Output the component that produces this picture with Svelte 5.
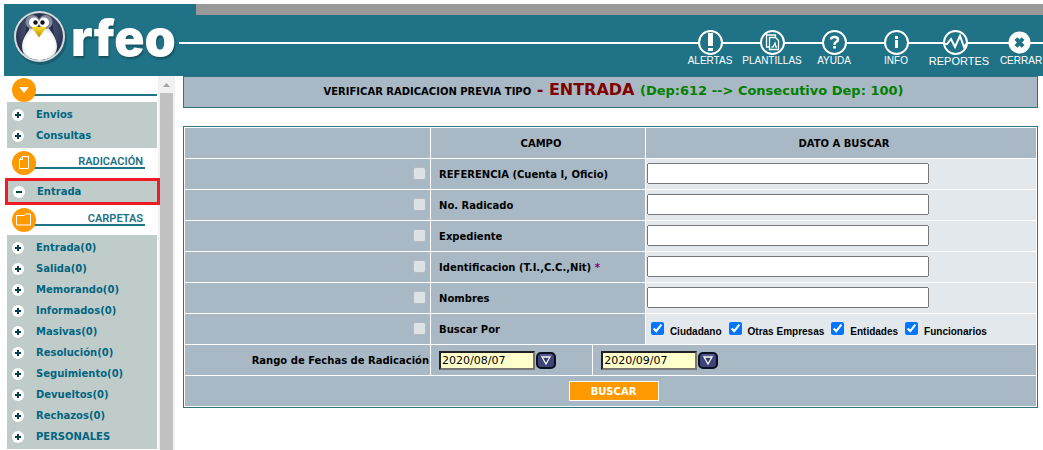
<script lang="ts">
	type Check = { id: string; label: string; on: boolean };

	const folders = [
		'Entrada(0)',
		'Salida(0)',
		'Memorando(0)',
		'Informados(0)',
		'Masivas(0)',
		'Resolución(0)',
		'Seguimiento(0)',
		'Devueltos(0)',
		'Rechazos(0)',
		'PERSONALES'
	];
	const fields = [
		{ id: 'referencia', label: 'REFERENCIA (Cuenta I, Oficio)', required: false },
		{ id: 'radicado', label: 'No. Radicado', required: false },
		{ id: 'expediente', label: 'Expediente', required: false },
		{ id: 'identificacion', label: 'Identificacion (T.I.,C.C.,Nit)', required: true },
		{ id: 'nombres', label: 'Nombres', required: false }
	];

	let values = $state<Record<string, string>>({});
	let groups = $state<Check[]>([
		{ id: 'ciudadano', label: 'Ciudadano', on: true },
		{ id: 'empresas', label: 'Otras Empresas', on: true },
		{ id: 'entidades', label: 'Entidades', on: true },
		{ id: 'funcionarios', label: 'Funcionarios', on: true }
	]);
	let from = $state('2020/08/07');
	let to = $state('2020/09/07');
</script>

{#snippet bullet(open: boolean)}
	<svg class="bullet" viewBox="0 0 12 12" aria-hidden="true">
		<circle cx="6" cy="6" r="6" fill="#fff" />
		<path d={open ? 'M3 6h6' : 'M3 6h6M6 3v6'} stroke="#073f4e" stroke-width="2" />
	</svg>
{/snippet}

{#snippet picker()}
	<button type="button" class="picker" aria-label="Abrir calendario">
		<svg viewBox="0 0 20 17">
			<rect x="1" y="1" width="18" height="15" rx="4" fill="#3d4578" stroke="#0b0f20" stroke-width="2" />
			<path d="M4 3h12" stroke="#6c75a8" />
			<path d="M6 5h8l-4 7z" fill="#343b70" stroke="#fff" stroke-width="1.3" />
		</svg>
	</button>
{/snippet}

<div class="page">
	<header>
		<a class="logo" href="#inicio">
			<svg viewBox="0 0 56 58" aria-hidden="true">
				<defs>
					<radialGradient id="night" cx="50%" cy="40%" r="60%">
						<stop offset="0" stop-color="#6b7594" />
						<stop offset="1" stop-color="#1f2946" />
					</radialGradient>
					<radialGradient id="belly" cx="50%" cy="55%" r="55%">
						<stop offset="0.75" stop-color="#fff" />
						<stop offset="1" stop-color="#d5dae0" />
					</radialGradient>
					<linearGradient id="beak" x2="0" y2="1">
						<stop offset="0" stop-color="#ffdf2e" />
						<stop offset="1" stop-color="#b98d00" />
					</linearGradient>
				</defs>
				<circle cx="29" cy="30" r="26" fill="#14515f" opacity="0.6" />
				<circle cx="27.5" cy="27.5" r="25.5" fill="#d5dadd" />
				<circle cx="27.5" cy="27.5" r="23.5" fill="url(#night)" />
				<path
					d="M27 5C17 5 14 11 14 18S9 32 10 40q5 11 17 11t17-10c2-9-3-16-3-23S37 5 27 5z"
					fill="#262f4c"
				/>
				<path
					d="M27 21c-6-5-9-4-10 0-4 5-7 11-7 17 0 8 8 13 17.500 13S45 46 45 38c0-6-3-12-7-17-2-4-5-4-11 0z"
					fill="url(#belly)"
				/>
				<circle cx="20.5" cy="13" r="7" fill="#858c9f" />
				<circle cx="33.5" cy="13" r="7" fill="#858c9f" />
				<circle cx="22" cy="13.5" r="5" fill="#fff" />
				<circle cx="32" cy="13.5" r="5" fill="#fff" />
				<circle cx="23.5" cy="13.5" r="2.2" fill="#111" />
				<circle cx="30.5" cy="13.5" r="2.2" fill="#111" />
				<path d="M19.500 18q4-1 7.500 0 4-1 7.500 0L27 28.500z" fill="url(#beak)" />
			</svg>
			<span>rfeo</span>
		</a>
		<div class="top">
			<div class="strip"></div>
			<nav>
				<a href="#alertas">
					<svg width="25" height="25" viewBox="0 0 25 25">
						<circle cx="12.5" cy="12.5" r="11.5" />
						<path class="solid" d="M10 3h5v13h-5zM10 18h5v3h-5z" />
					</svg>
					ALERTAS
				</a>
				<a href="#plantillas">
					<svg width="25" height="25" viewBox="0 0 25 25">
						<circle cx="12.5" cy="12.5" r="11.5" />
						<path
							class="thin"
							d="M9 17H6.500V5H15.500V7M9.500 7.500h6l3 3v9h-9zM11.500 17h1.500l2-4 1 4h1"
						/>
					</svg>
					PLANTILLAS
				</a>
				<a href="#ayuda">
					<svg width="25" height="25" viewBox="0 0 25 25">
						<circle cx="12.5" cy="12.5" r="11.5" />
						<path d="M9 9.500Q9 7 12.500 7T16 9.500Q16 11 14 12 12.500 12.800 12.500 15" stroke-width="2.5" />
						<path class="solid" d="M11 16h3v2.500h-3z" />
					</svg>
					AYUDA
				</a>
				<a href="#info">
					<svg width="25" height="25" viewBox="0 0 25 25">
						<circle cx="12.5" cy="12.5" r="11.5" />
						<path class="solid" d="M11 6h3v3h-3zM11 10h3v8h-3z" />
					</svg>
					INFO
				</a>
				<a href="#reportes" class="large">
					<svg width="33" height="25" viewBox="0 0 33 25">
						<circle cx="12.5" cy="12.5" r="11.5" />
						<path d="M1 14h3l4-5 4 8 5-11 4 11 3-4" />
					</svg>
					REPORTES
				</a>
				<a href="#cerrar" class="close">
					<svg width="29" height="25" viewBox="0 0 29 25">
						<circle class="solid" cx="12.5" cy="12.5" r="11" />
						<path class="cross" d="M9 8.500l7 8M16 8.500l-7 8" />
					</svg>
					CERRAR
				</a>
			</nav>
		</div>
	</header>

	<div class="body">
		<aside>
			<div class="menu">
				<div class="head first">
					<svg viewBox="0 0 24 24"><circle cx="12" cy="12" r="12" /><path d="M8 9.500h8l-4 5z" fill="#fff" /></svg>
					<div class="line"></div>
				</div>
				<ul>
					<li><a href="#envios">{@render bullet(false)}Envios</a></li>
					<li><a href="#consultas">{@render bullet(false)}Consultas</a></li>
				</ul>

				<div class="head">
					<svg viewBox="0 0 24 24">
						<circle cx="12" cy="12" r="12" />
						<path d="M10.500 5.500h6v12h-9v-9zM10.500 5.500v3h-3" />
					</svg>
					<h2 class="line">RADICACIÓN</h2>
				</div>
				<ul class="current">
					<li><a href="#radicar">{@render bullet(true)}Entrada</a></li>
				</ul>

				<div class="head">
					<svg viewBox="0 0 24 24">
						<circle cx="12" cy="12" r="12" />
						<path d="M4.500 7.500h8l1.500-1.500h4.500v11h-14z" />
					</svg>
					<h2 class="line">CARPETAS</h2>
				</div>
				<ul>
					{#each folders as folder}
						<li><a href="#carpeta">{@render bullet(false)}{folder}</a></li>
					{/each}
				</ul>
			</div>
			<div class="scrollbar">
				<svg viewBox="0 0 17 17"><path d="M5 11l3.500-4 3.500 4z" fill="#a3a3a3" /></svg>
				<div class="thumb"></div>
			</div>
		</aside>

		<main>
			<h1>
				VERIFICAR RADICACION PREVIA TIPO
				<span class="kind">- ENTRADA</span>
				<span class="dep">(Dep:612 --&gt; Consecutivo Dep: 100)</span>
			</h1>

			<form onsubmit={(e) => e.preventDefault()}>
				<table>
					<colgroup>
						<col style="width: 28.9%" />
						<col style="width: 19%" />
						<col style="width: 6.1%" />
						<col />
					</colgroup>
					<thead>
						<tr>
							<th></th>
							<th colspan="2">CAMPO</th>
							<th>DATO A BUSCAR</th>
						</tr>
					</thead>
					<tbody>
						{#each fields as field}
							<tr>
								<td class="tick"><input type="checkbox" disabled aria-label={field.label} /></td>
								<td class="name" colspan="2">
									<label for={field.id}
										>{field.label}{#if field.required}<span class="star">&nbsp;*</span>{/if}</label
									>
								</td>
								<td class="value">
									<input type="text" id={field.id} bind:value={values[field.id]} />
								</td>
							</tr>
						{/each}
						<tr>
							<td class="tick"><input type="checkbox" disabled aria-label="Buscar Por" /></td>
							<td class="name" colspan="2">Buscar Por</td>
							<td class="value">
								<div class="groups">
									{#each groups as group (group.id)}
										<label><input type="checkbox" bind:checked={group.on} />{group.label}</label>
									{/each}
								</div>
							</td>
						</tr>
						<tr>
							<td class="range"><label for="from">Rango de Fechas de Radicación</label></td>
							<td class="name">
								<div class="date">
									<input type="text" id="from" bind:value={from} />
									{@render picker()}
								</div>
							</td>
							<td class="name" colspan="2">
								<div class="date">
									<input type="text" aria-label="Fecha final" bind:value={to} />
									{@render picker()}
								</div>
							</td>
						</tr>
						<tr>
							<td class="submit" colspan="4"><button type="submit">BUSCAR</button></td>
						</tr>
					</tbody>
				</table>
			</form>
		</main>
	</div>
</div>

<style>
	:global(body) {
		background: #fff;
	}

	.page {
		--teal: #207286;
		--cell: #a8b9c5;
		display: flex;
		flex-direction: column;
		min-height: 100vh;
		box-sizing: border-box;
		padding: 4px 0 0 4px;
		font-family: Verdana, 'DejaVu Sans', sans-serif;
		font-size: 10px;
		color: #000;
	}

	a {
		text-decoration: none;
	}

	header {
		display: flex;
		height: 72px;
		background: var(--teal);
	}

	.logo {
		display: flex;
		align-items: center;
		width: 175px;
		flex-shrink: 0;
		box-sizing: border-box;
		padding: 0 0 4px 8px;
		color: #fff;
		font: 900 50px/56px Inter, sans-serif;
		text-shadow: 1px 2px 2px #14515f;
		& svg {
			width: 56px;
			height: 58px;
			margin-right: 3px;
		}
	}

	.top {
		flex: 1;
	}

	.strip {
		height: 11px;
		margin-left: 17px;
		background: #999;
	}

	nav {
		display: flex;
		justify-content: flex-end;
		padding-top: 15px;
		background: linear-gradient(#fff, #fff) 0 27px / 100% 2px no-repeat;
		& a {
			display: flex;
			flex-direction: column;
			align-items: center;
			box-sizing: border-box;
			width: 62px;
			color: #fff;
			font: 10px/12px 'Liberation Sans', Arial, sans-serif;
		}
		& .large {
			font-size: 11px;
			width: 64px;
		}
		& .close {
			width: 52px;
			padding-left: 8px;
		}
		& svg {
			fill: none;
			stroke: #fff;
			stroke-width: 2;
		}
		& circle {
			fill: var(--teal);
		}
		& .solid {
			fill: #fff;
			stroke: none;
		}
		& .thin {
			stroke-width: 1.3;
		}
		& .cross {
			stroke: var(--teal);
			stroke-width: 4;
		}
	}

	.body {
		display: flex;
		flex: 1;
	}

	aside {
		display: flex;
		width: 171px;
		flex-shrink: 0;
	}

	.menu {
		flex: 1;
		padding: 0 1px 1px 3px;
	}

	.head {
		display: flex;
		padding: 3px 12px 3px 5px;
		&.first {
			padding: 2px 0 0 5px;
		}
		& svg {
			position: relative;
			width: 24px;
			height: 24px;
			fill: none;
			stroke: #fff;
		}
		& circle {
			fill: #f90;
			stroke: none;
		}
	}

	.line {
		flex: 1;
		height: 12px;
		margin: 0 0 0 -2px;
		padding: 4px 2px 0 0;
		border-bottom: 2px solid var(--teal);
		color: var(--teal);
		font: 600 11px/14px Roboto, sans-serif;
		text-align: right;
	}

	ul {
		margin: 0;
		padding: 2px 0;
		list-style: none;
		background: #c0ccca;
		& a {
			display: flex;
			align-items: center;
			height: 21px;
			padding-left: 5px;
			color: #006580;
			font-weight: bold;
		}
	}

	.current {
		position: relative;
		margin: 0 -3px 0 -2px;
		padding: 0;
		border: 3px solid #ed1c24;
	}

	.bullet {
		width: 12px;
		height: 12px;
		margin-right: 12px;
	}

	.scrollbar {
		display: flex;
		flex-direction: column;
		width: 17px;
		background: #f1f1f1;
		& .thumb {
			flex: 1;
			margin: 0 2px;
			background: #c1c1c1;
		}
	}

	main {
		flex: 1;
		padding: 0 5px 0 8px;
	}

	h1 {
		margin: 0 0 18px;
		padding-left: 6px;
		border: 1px solid #33717f;
		background: var(--cell);
		font-size: 10px;
		line-height: 30px;
		text-align: center;
	}

	h1 span {
		line-height: 20px;
		margin-left: 2px;
	}

	.kind {
		color: #800000;
		font-size: 16px;
	}

	.dep {
		color: #008000;
		font-size: 13px;
	}

	table {
		width: 100%;
		border: 1px solid #33717f;
		border-spacing: 1px;
		table-layout: fixed;
	}

	th,
	td {
		height: 30px;
		box-sizing: border-box;
		padding: 0;
		background: var(--cell);
		font-weight: bold;
	}

	th,
	.submit {
		padding-left: 6px;
	}

	.name {
		padding-left: 8px;
	}

	.tick {
		text-align: right;
		& input {
			margin: 0 4px 2px 0;
			vertical-align: middle;
		}
	}

	.star {
		color: #800080;
	}

	.value {
		padding: 0 0 2px 1px;
		background: #e3e8ec;
		& input[type='text'] {
			display: block;
			width: 282px;
			max-width: 100%;
			height: 21px;
			box-sizing: border-box;
		}
	}

	.groups {
		display: flex;
		gap: 7px;
		padding: 5px 0 0 4px;
		font: bold 10px/14px 'Liberation Sans', Arial, sans-serif;
		& label {
			display: flex;
			align-items: flex-end;
		}
		& input {
			margin: 0 6px 4px 0;
		}
	}

	.range {
		padding-right: 1px;
		text-align: right;
	}

	.date {
		display: flex;
		align-items: center;
		gap: 1px;
		& input {
			width: 96px;
			height: 19px;
			box-sizing: border-box;
			padding: 0 1px;
			border: 2px inset #767676;
			background: #ffc;
			font: 11px Verdana, 'DejaVu Sans', sans-serif;
		}
	}

	.picker {
		padding: 0;
		border: none;
		background: none;
		& svg {
			display: block;
			width: 20px;
			height: 17px;
		}
	}

	.submit {
		text-align: center;
		& button {
			width: 90px;
			height: 20px;
			padding: 0;
			border: 1px solid #fff;
			background: #f90;
			color: #fff;
			font: bold 10px Verdana, 'DejaVu Sans', sans-serif;
		}
	}
</style>
